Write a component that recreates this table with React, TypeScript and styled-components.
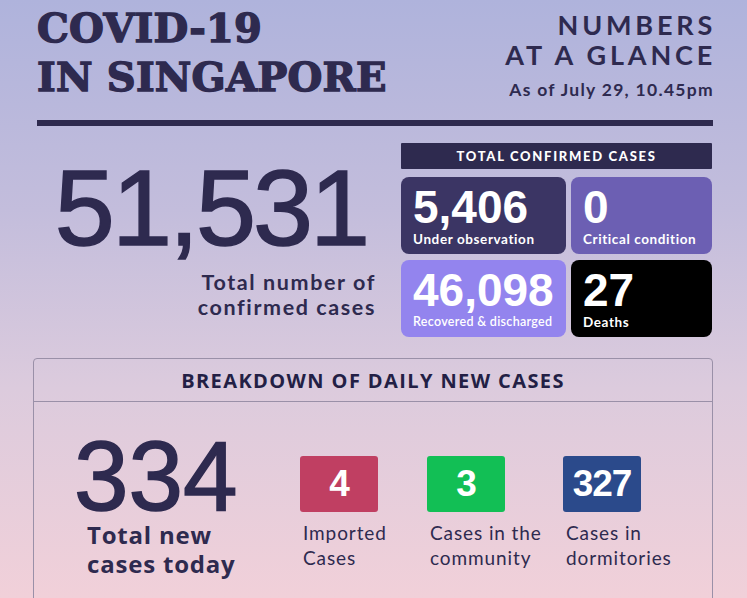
import React from 'react';
import styled, { createGlobalStyle } from 'styled-components';

const GlobalStyle = createGlobalStyle`
  html, body {
    margin: 0;
    padding: 0;
  }
  body {
    width: 747px;
    height: 598px;
    overflow: hidden;
    background: linear-gradient(180deg, #afb3dc 0%, #c3bddc 35%, #dccbdd 65%, #f1d0d9 100%);
    font-family: Lato, "Noto Sans", sans-serif;
    color: #2e2a4f;
  }
`;

const Page = styled.div`
  width: 747px;
  height: 598px;
  padding: 0 34px 0 33px;
  box-sizing: border-box;
  display: flex;
  flex-direction: column;
`;

const Header = styled.header`
  display: flex;
  justify-content: space-between;
  padding: 3px 0 0 4px;
`;

const Title = styled.h1`
  margin: 0;
  font-family: "DejaVu Serif", "Liberation Serif", serif;
  font-weight: 900;
  font-size: 40px;
  line-height: 49px;
  letter-spacing: 0.2px;
  color: #2e2a4f;
  -webkit-text-stroke: 1.4px #2e2a4f;
`;

const Glance = styled.div`
  display: flex;
  flex-direction: column;
  align-items: flex-end;
  padding-top: 7px;
`;

const GlanceTitle = styled.div`
  font-family: Lato, sans-serif;
  font-weight: 700;
  font-size: 27px;
  line-height: 30px;
  letter-spacing: 3.8px;
  margin-right: -3px;
  text-align: right;
`;

const AsOf = styled.div`
  margin-top: 9px;
  font-weight: 700;
  font-size: 17.5px;
  letter-spacing: 1.3px;
  margin-right: -1px;
`;

const Rule = styled.hr`
  margin: 19px 0 0 4px;
  border: none;
  height: 6px;
  background: #2e2a4f;
`;

const Totals = styled.section`
  display: flex;
  margin-top: 17px;
  padding-left: 4px;
`;

const TotalLeft = styled.div`
  width: 338px;
  display: flex;
  flex-direction: column;
  align-items: flex-end;
`;

const BigNumber = styled.div`
  font-family: "Liberation Sans", Arial, sans-serif;
  font-size: 108px;
  line-height: 112px;
  letter-spacing: -3px;
  align-self: center;
  margin: 9px 0 0 10px;
  -webkit-text-stroke: 1.5px #2e2a4f;
`;

const BigLabel = styled.div`
  margin-top: 6px;
  font-weight: 700;
  font-size: 21.5px;
  line-height: 25px;
  letter-spacing: 1.6px;
  margin-right: -1px;
  text-align: right;
`;

const TotalRight = styled.div`
  margin-left: 26px;
  width: 311px;
  display: flex;
  flex-direction: column;
  gap: 8px;
`;

const Banner = styled.div`
  height: 26px;
  background: #2e2a4f;
  color: #fff;
  display: flex;
  align-items: center;
  justify-content: center;
  font-weight: 900;
  font-size: 13px;
  letter-spacing: 1.7px;
  border-radius: 1px;
`;

const CardGrid = styled.div`
  display: grid;
  grid-template-columns: 165px 1fr;
  grid-auto-rows: 77px;
  gap: 6px 5px;
`;

const Card = styled.div<{ $bg: string }>`
  background: ${p => p.$bg};
  border-radius: 8px;
  color: #fff;
  display: flex;
  flex-direction: column;
  padding: 8px 0 0 12px;
`;

const CardNumber = styled.div`
  font-family: "Liberation Sans", Arial, sans-serif;
  font-weight: 700;
  font-size: 46px;
  line-height: 44px;
`;

const CardLabel = styled.div<{ $small?: boolean }>`
  margin-top: 2px;
  font-size: ${p => (p.$small ? '12.5px' : '13.5px')};
  font-weight: ${p => (p.$small ? 600 : 700)};
  letter-spacing: ${p => (p.$small ? '0.3px' : '0.6px')};
  white-space: nowrap;
`;

const Breakdown = styled.section`
  margin-top: 21px;
  border: 1px solid #9a90a8;
  border-radius: 4px;
  flex: 1;
  margin-bottom: -10px;
`;

const BreakdownHead = styled.div`
  height: 42px;
  border-bottom: 1px solid #9a90a8;
  display: flex;
  align-items: center;
  justify-content: center;
  font-family: "Open Sans", sans-serif;
  font-weight: 700;
  font-size: 20px;
  letter-spacing: 1.4px;
  color: #231f45;
`;

const BreakdownBody = styled.div`
  display: flex;
  align-items: flex-start;
  padding: 24px 0 0 0;
`;

const TodayCol = styled.div`
  width: 266px;
  display: flex;
  flex-direction: column;
  padding-left: 40px;
  box-sizing: border-box;
`;

const TodayNumber = styled.div`
  font-family: "Liberation Sans", sans-serif;
  font-size: 98px;
  line-height: 100px;
  color: #2e2a4f;
  -webkit-text-stroke: 1.5px #2e2a4f;
`;

const TodayLabel = styled.div`
  margin-top: -6px;
  padding-left: 13px;
  font-family: "Open Sans", sans-serif;
  font-weight: 700;
  font-size: 24px;
  line-height: 29px;
  letter-spacing: 0.8px;
`;

const Source = styled.div<{ $w: number }>`
  width: ${p => p.$w}px;
  display: flex;
  flex-direction: column;
  margin-top: 30px;
`;

const Chip = styled.div<{ $bg: string }>`
  width: 78px;
  height: 56px;
  border-radius: 3px;
  background: ${p => p.$bg};
  color: #fff;
  display: flex;
  align-items: center;
  justify-content: center;
  font-family: "Liberation Sans", sans-serif;
  font-weight: 700;
  font-size: 37px;
  letter-spacing: -1px;
`;

const SourceLabel = styled.div`
  margin-top: 8px;
  padding-left: 3px;
  font-size: 19px;
  line-height: 25px;
  letter-spacing: 0.9px;
  color: #2e2a4f;
`;

const cards = [
  { n: '5,406', label: 'Under observation', bg: '#3b3564' },
  { n: '0', label: 'Critical condition', bg: '#6c5fb3' },
  { n: '46,098', label: 'Recovered & discharged', bg: '#9384ee', small: true },
  { n: '27', label: 'Deaths', bg: '#000000' },
];

const sources = [
  { n: '4', label: ['Imported', 'Cases'], bg: '#c03f62', w: 127 },
  { n: '3', label: ['Cases in the', 'community'], bg: '#12bf55', w: 136 },
  { n: '327', label: ['Cases in', 'dormitories'], bg: '#2b4a8b', w: 140 },
];

export default function App() {
  return (
    <>
      <GlobalStyle />
      <Page>
        <Header>
          <Title>COVID-19<br />IN SINGAPORE</Title>
          <Glance>
            <GlanceTitle>NUMBERS<br />AT A GLANCE</GlanceTitle>
            <AsOf>As of July 29, 10.45pm</AsOf>
          </Glance>
        </Header>
        <Rule />
        <Totals>
          <TotalLeft>
            <BigNumber>51,531</BigNumber>
            <BigLabel>Total number of<br />confirmed cases</BigLabel>
          </TotalLeft>
          <TotalRight>
            <Banner>TOTAL CONFIRMED CASES</Banner>
            <CardGrid>
              {cards.map(c => (
                <Card key={c.label} $bg={c.bg}>
                  <CardNumber>{c.n}</CardNumber>
                  <CardLabel $small={c.small}>{c.label}</CardLabel>
                </Card>
              ))}
            </CardGrid>
          </TotalRight>
        </Totals>
        <Breakdown>
          <BreakdownHead>BREAKDOWN OF DAILY NEW CASES</BreakdownHead>
          <BreakdownBody>
            <TodayCol>
              <TodayNumber>334</TodayNumber>
              <TodayLabel>Total new<br />cases today</TodayLabel>
            </TodayCol>
            {sources.map(s => (
              <Source key={s.n} $w={s.w}>
                <Chip $bg={s.bg}>{s.n}</Chip>
                <SourceLabel>{s.label[0]}<br />{s.label[1]}</SourceLabel>
              </Source>
            ))}
          </BreakdownBody>
        </Breakdown>
      </Page>
    </>
  );
}
